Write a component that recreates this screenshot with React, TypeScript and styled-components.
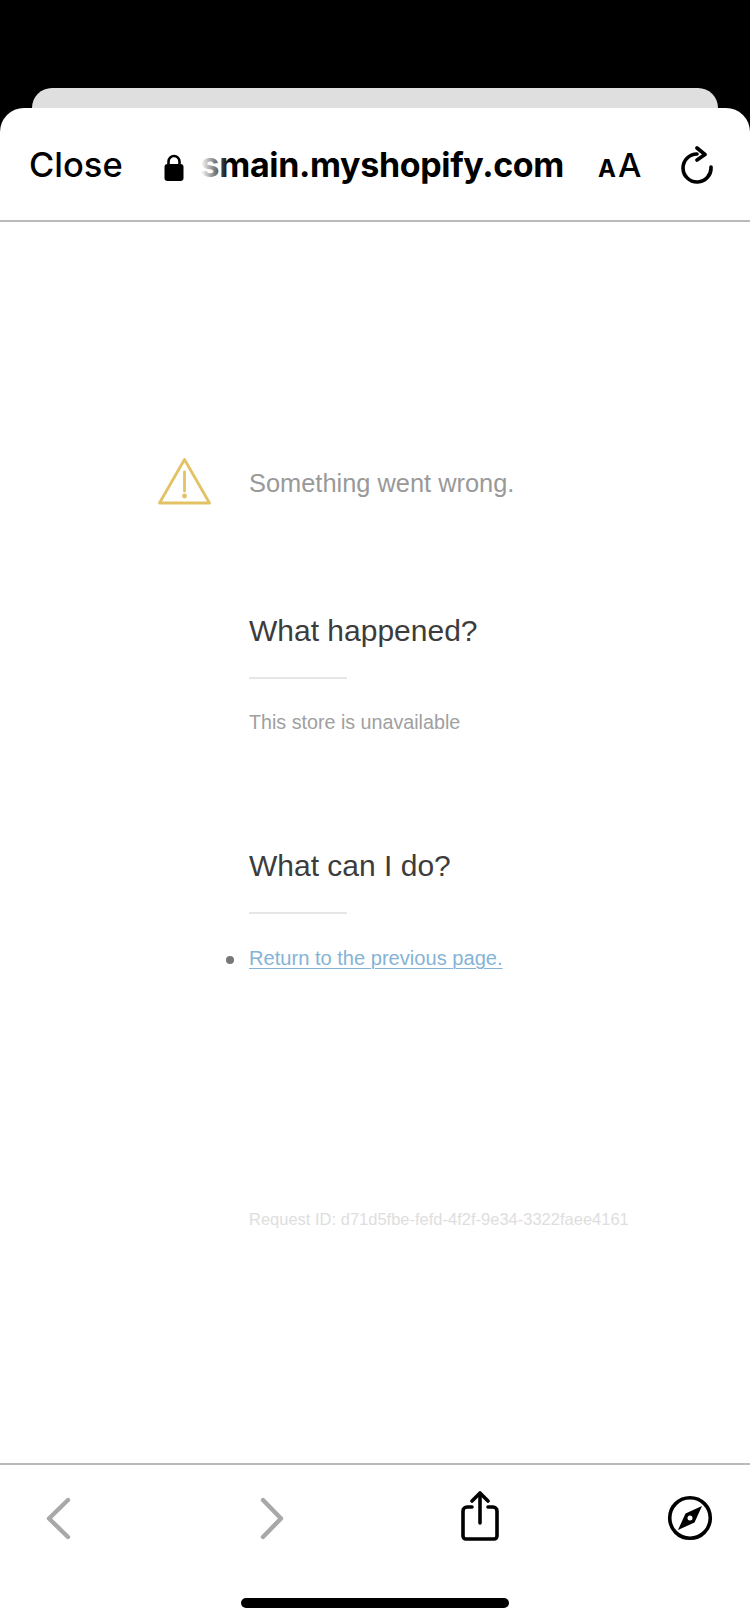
import React from 'react';
import styled, {createGlobalStyle} from 'styled-components';

const GlobalStyle = createGlobalStyle`
  html, body {
    margin: 0;
    padding: 0;
    background: #000;
  }
`

const Screen = styled.div`
  width: 750px;
  height: 1624px;
  display: flex;
  flex-direction: column;
  overflow: hidden;
  padding-top: 88px;
  box-sizing: border-box;
  background: #000;
  font-family: Inter, "Liberation Sans", sans-serif;
`

const BackCard = styled.div`
  flex: none;
  height: 20px;
  margin: 0 32px;
  background: #dfdfdf;
  border-radius: 20px 20px 0 0;
`

const Sheet = styled.div`
  flex: 1;
  min-height: 0;
  display: flex;
  flex-direction: column;
  background: #fff;
  border-radius: 24px 24px 0 0;
`

const Header = styled.header`
  flex: none;
  height: 114px;
  box-sizing: border-box;
  border-bottom: 2px solid #bababa;
  display: flex;
  align-items: center;
  padding: 0 0 0 29px;
  color: #000;
`

const CloseLabel = styled.span`
  width: 135px;
  flex: none;
  margin-top: 2px;
  font-size: 34.5px;
  font-weight: 500;
  line-height: 40px;
`

const LockIcon = styled.svg`
  flex: none;
  width: 20px;
  height: 27px;
  margin-top: 6px;
`

const Domain = styled.div`
  position: relative;
  flex: none;
  width: 367px;
  margin-left: 13px;
  margin-top: 2px;
  white-space: nowrap;
  text-align: right;
  font-size: 34px;
  font-weight: 700;
  letter-spacing: -0.35px;
  line-height: 42px;

  &::after {
    content: "";
    position: absolute;
    left: 0;
    top: 0;
    bottom: 0;
    width: 32px;
    background: linear-gradient(to right, rgba(255, 255, 255, 0.9) 20%, rgba(255, 255, 255, 0));
  }
`

const TextSize = styled.span`
  flex: none;
  display: flex;
  align-items: baseline;
  gap: 2px;
  margin-left: 34px;
  margin-top: 5px;
  line-height: 40px;
`

const SmallA = styled.span`
  font-size: 24px;
  font-weight: 700;
`

const BigA = styled.span`
  font-size: 33px;
  font-weight: 500;
`

const ReloadIcon = styled.svg`
  flex: none;
  width: 34px;
  height: 38px;
  margin-left: 39px;
  margin-top: 2px;
`

const Main = styled.main`
  flex: 1;
  min-height: 0;
  padding: 246px 0 0 249px;
  font-family: "Liberation Sans", Arial, sans-serif;
`

const Alert = styled.div`
  position: relative;
  font-size: 25.4px;
  line-height: 30px;
  color: #999;
`

const AlertIcon = styled.svg`
  position: absolute;
  left: -92px;
  top: -12px;
  width: 56px;
  height: 52px;
`

const Section = styled.section<{ $gap: number }>`
  margin-top: ${(props) => props.$gap}px;
`

const Title = styled.h2`
  margin: 0;
  font-size: 30px;
  font-weight: 400;
  line-height: 34px;
  color: #3c3c3c;
`

const Rule = styled.div`
  width: 98px;
  height: 2px;
  margin-top: 29px;
  background: #e6e6e6;
`

const Note = styled.p`
  margin: 31px 0 0;
  font-size: 19.7px;
  font-weight: 400;
  line-height: 24px;
  color: #a0a0a0;
`

const Options = styled.ul`
  margin: 32px 0 0;
  padding: 0;
  list-style: none;
`

const Option = styled.li`
  position: relative;
  font-size: 20.1px;
  line-height: 24px;

  &::before {
    content: "";
    position: absolute;
    left: -23px;
    top: 10px;
    width: 8px;
    height: 8px;
    border-radius: 50%;
    background: #777;
  }
`

const BackLink = styled.a`
  color: #85b3d6;
  text-decoration: underline;
  text-underline-offset: 3px;
  text-decoration-thickness: 1px;
`

const RequestId = styled.p`
  margin: 238px 0 0;
  font-size: 16.5px;
  line-height: 22px;
  color: #dedede;
`

const Toolbar = styled.footer`
  flex: none;
  height: 161px;
  box-sizing: border-box;
  border-top: 2px solid #bababa;
  padding: 26px 0 0 45px;
  position: relative;
  display: grid;
  grid-template-columns: 214px 201px 207px auto;
  align-items: start;
`

const ChevronIcon = styled.svg`
  display: block;
  width: 26px;
  height: 44px;
  margin-top: 6px;
`

const ShareIcon = styled.svg`
  display: block;
  width: 40px;
  height: 50px;
`

const CompassIcon = styled.svg`
  display: block;
  width: 46px;
  height: 46px;
  margin-top: 4px;
`

const HomeBar = styled.div`
  position: absolute;
  left: 241px;
  bottom: 16px;
  width: 268px;
  height: 10px;
  border-radius: 5px;
  background: #000;
`

export default function App() {
    return (
        <>
            <GlobalStyle/>
            <Screen>
                <BackCard/>
                <Sheet>
                    <Header>
                        <CloseLabel>Close</CloseLabel>
                        <LockIcon viewBox="0 0 20 27">
                            <path d="M4.5 11V7.5a5.5 5.5 0 0 1 11 0V11" fill="none" stroke="#000" strokeWidth="2.6"/>
                            <rect x="0.5" y="10" width="19" height="17" rx="3" fill="#000"/>
                        </LockIcon>
                        <Domain>smain.myshopify.com</Domain>
                        <TextSize><SmallA>A</SmallA><BigA>A</BigA></TextSize>
                        <ReloadIcon viewBox="0 0 34 38" fill="none" stroke="#000" strokeWidth="3.6" strokeLinecap="round" strokeLinejoin="round">
                            <path d="M17 8A14 14 0 1 0 31 21"/>
                            <path d="M17 2l8 6.5-8 5.5"/>
                        </ReloadIcon>
                    </Header>
                    <Main>
                        <Alert>
                            <AlertIcon viewBox="0 0 56 52" fill="none" stroke="#e3c265" strokeWidth="2.8" strokeLinejoin="round" strokeLinecap="round">
                                <path d="M27.500 3.500L52.500 47H2.500z"/>
                                <path d="M27.500 16v19"/>
                                <circle cx="27.500" cy="40" r="1" fill="#e3c265"/>
                            </AlertIcon>
                            Something went wrong.
                        </Alert>
                        <Section $gap={116}>
                            <Title>What happened?</Title>
                            <Rule/>
                            <Note>This store is unavailable</Note>
                        </Section>
                        <Section $gap={115}>
                            <Title>What can I do?</Title>
                            <Rule/>
                            <Options>
                                <Option><BackLink href="#">Return to the previous page.</BackLink></Option>
                            </Options>
                        </Section>
                        <RequestId>Request ID: d71d5fbe-fefd-4f2f-9e34-3322faee4161</RequestId>
                    </Main>
                    <Toolbar>
                        <ChevronIcon viewBox="0 0 26 44" fill="none" stroke="#a8a8a8" strokeWidth="4.4" strokeLinecap="round" strokeLinejoin="round">
                            <path d="M23 3L4 21.500 23 40"/>
                        </ChevronIcon>
                        <ChevronIcon viewBox="0 0 26 44" fill="none" stroke="#a8a8a8" strokeWidth="4.4" strokeLinecap="round" strokeLinejoin="round">
                            <path d="M4 3l18 18.500L4 40"/>
                        </ChevronIcon>
                        <ShareIcon viewBox="0 0 40 50" fill="none" stroke="#000" strokeWidth="3.6" strokeLinecap="round" strokeLinejoin="round">
                            <path d="M12 16H7a4 4 0 0 0-4 4v25a3 3 0 0 0 3 3h28a3 3 0 0 0 3-3V20a4 4 0 0 0-4-4h-5"/>
                            <path d="M20 32V3"/>
                            <path d="M12 10l8-8 8 8"/>
                        </ShareIcon>
                        <CompassIcon viewBox="0 0 46 46">
                            <circle cx="23" cy="23" r="20.300" fill="none" stroke="#000" strokeWidth="3.6"/>
                            <path d="M35 11L18.500 18.500 11 35l16.500-7.500zM23 20.500a2.500 2.500 0 1 1 0 5 2.500 2.500 0 0 1 0-5z" fill="#000" fillRule="evenodd"/>
                        </CompassIcon>
                        <HomeBar/>
                    </Toolbar>
                </Sheet>
            </Screen>
        </>
    )
}
